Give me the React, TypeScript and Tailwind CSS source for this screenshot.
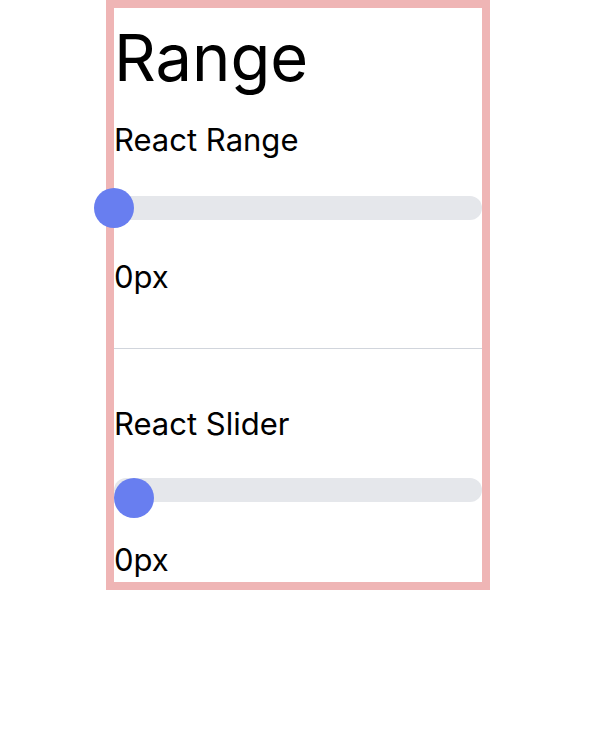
import { useState } from 'react'

/**
 * Two range demos stacked in a bordered column:
 * one with the thumb centred on the track start, one with the thumb flush inside it.
 */
export default function App() {
  const [rangeValue] = useState(0)
  const [sliderValue] = useState(0)

  return (
    <div className="w-96 mx-auto border-8 border-[#efb5b5] pb-[4px] bg-white text-black font-['Inter','Liberation_Sans',Arial,sans-serif]">
      <h1 className="text-[65px] leading-[60px] mt-[20px]">Range</h1>

      <h2 className="text-[31px] leading-9 mt-[34px]">React Range</h2>
      {/* thumb sits centred on the track's start */}
      <div className="h-10 mt-[30px] flex items-center">
        <div className="relative w-full h-6 rounded-full bg-gray-200">
          <div className="absolute -left-5 top-1/2 -translate-y-1/2 w-10 h-10 rounded-full bg-[#687ef0]" />
        </div>
      </div>
      <p className="text-[31px] leading-9 mt-[31px]">{rangeValue}px</p>

      <hr className="mt-[53px] border-0 h-px bg-gray-300" />

      <h2 className="text-[31px] leading-9 mt-[57px]">React Slider</h2>
      {/* thumb kept inside the track, aligned to its top */}
      <div className="h-10 mt-[36px]">
        <div className="relative w-full h-6 rounded-full bg-gray-200">
          <div className="absolute left-0 top-0 w-10 h-10 rounded-full bg-[#687ef0]" />
        </div>
      </div>
      <p className="text-[31px] leading-9 mt-[24px]">{sliderValue}px</p>
    </div>
  )
}
